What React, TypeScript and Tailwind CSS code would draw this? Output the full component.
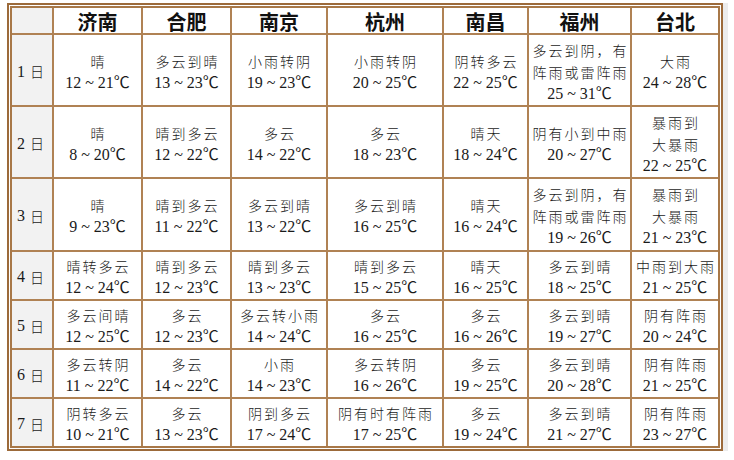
import React from "react";

type Cell = { t: string[]; n: string };

const cities = ["济南", "合肥", "南京", "杭州", "南昌", "福州", "台北"];

const c = (t: string | string[], n: string): Cell => ({
  t: Array.isArray(t) ? t : [t],
  n,
});

const rows: Cell[][] = [
  [
    c("晴", "12 ~ 21℃"),
    c("多云到晴", "13 ~ 23℃"),
    c("小雨转阴", "19 ~ 23℃"),
    c("小雨转阴", "20 ~ 25℃"),
    c("阴转多云", "22 ~ 25℃"),
    c(["多云到阴，有", "阵雨或雷阵雨"], "25 ~ 31℃"),
    c("大雨", "24 ~ 28℃"),
  ],
  [
    c("晴", "8 ~ 20℃"),
    c("晴到多云", "12 ~ 22℃"),
    c("多云", "14 ~ 22℃"),
    c("多云", "18 ~ 23℃"),
    c("晴天", "18 ~ 24℃"),
    c("阴有小到中雨", "20 ~ 27℃"),
    c(["暴雨到", "大暴雨"], "22 ~ 25℃"),
  ],
  [
    c("晴", "9 ~ 23℃"),
    c("晴到多云", "11 ~ 22℃"),
    c("多云到晴", "13 ~ 22℃"),
    c("多云到晴", "16 ~ 25℃"),
    c("晴天", "16 ~ 24℃"),
    c(["多云到阴，有", "阵雨或雷阵雨"], "19 ~ 26℃"),
    c(["暴雨到", "大暴雨"], "21 ~ 23℃"),
  ],
  [
    c("晴转多云", "12 ~ 24℃"),
    c("晴到多云", "12 ~ 23℃"),
    c("晴到多云", "13 ~ 23℃"),
    c("晴到多云", "15 ~ 25℃"),
    c("晴天", "16 ~ 25℃"),
    c("多云到晴", "18 ~ 25℃"),
    c("中雨到大雨", "21 ~ 25℃"),
  ],
  [
    c("多云间晴", "12 ~ 25℃"),
    c("多云", "12 ~ 23℃"),
    c("多云转小雨", "14 ~ 24℃"),
    c("多云", "16 ~ 25℃"),
    c("多云", "16 ~ 26℃"),
    c("多云到晴", "19 ~ 27℃"),
    c("阴有阵雨", "20 ~ 24℃"),
  ],
  [
    c("多云转阴", "11 ~ 22℃"),
    c("多云", "14 ~ 22℃"),
    c("小雨", "14 ~ 23℃"),
    c("多云转阴", "16 ~ 26℃"),
    c("多云", "19 ~ 25℃"),
    c("多云到晴", "20 ~ 28℃"),
    c("阴有阵雨", "21 ~ 25℃"),
  ],
  [
    c("阴转多云", "10 ~ 21℃"),
    c("多云", "13 ~ 23℃"),
    c("阴到多云", "17 ~ 24℃"),
    c("阴有时有阵雨", "17 ~ 25℃"),
    c("多云", "19 ~ 24℃"),
    c("多云到晴", "21 ~ 27℃"),
    c("阴有阵雨", "23 ~ 27℃"),
  ],
];

const cjk = { fontFamily: '"Noto Sans CJK SC", sans-serif' };
const num = { fontFamily: '"Liberation Serif", "Noto Sans CJK SC", serif' };

export default function App() {
  return (
    <div className="w-[734px] h-[460px] bg-white pl-[7px] pt-[3px]">
      <div className="w-[716px] border-2 border-[#9c6a3a] p-px bg-white shadow-[5px_0_0_#ececec]">
        <div className="grid grid-cols-[40px_87px_87px_94px_114px_83px_101px_86px] grid-rows-[25px_70px_70px_71px_47px_47px_47px_47px] gap-[2px] border-2 border-[#a87848] bg-[#b08254]">
          <div className="bg-[#f2f2f2]" />
          {cities.map((city) => (
            <div
              key={city}
              className="bg-white flex items-center justify-center text-[20px] leading-[25px] font-bold text-[#111] pt-[2px]"
              style={cjk}
            >
              {city}
            </div>
          ))}
          {rows.map((row, i) => (
            <React.Fragment key={i}>
              <div className="bg-[#f2f2f2] flex items-center pl-[5px] pt-[3px] text-[#1a1a1a]">
                <span className="text-[16px]" style={num}>
                  {i + 1}
                </span>
                <span className="text-[14px] ml-[5px] font-light" style={cjk}>
                  日
                </span>
              </div>
              {row.map((cell, j) => (
                <div
                  key={j}
                  className="bg-white flex flex-col items-center justify-center pt-[3px] leading-[22px] text-[#1a1a1a]"
                >
                  {cell.t.map((line, k) => (
                    <span
                      key={k}
                      className="text-[14px] tracking-[2px] pl-[2px] font-light whitespace-nowrap"
                      style={cjk}
                    >
                      {line}
                    </span>
                  ))}
                  <span className="text-[16px] whitespace-nowrap" style={num}>
                    {cell.n}
                  </span>
                </div>
              ))}
            </React.Fragment>
          ))}
        </div>
      </div>
    </div>
  );
}
